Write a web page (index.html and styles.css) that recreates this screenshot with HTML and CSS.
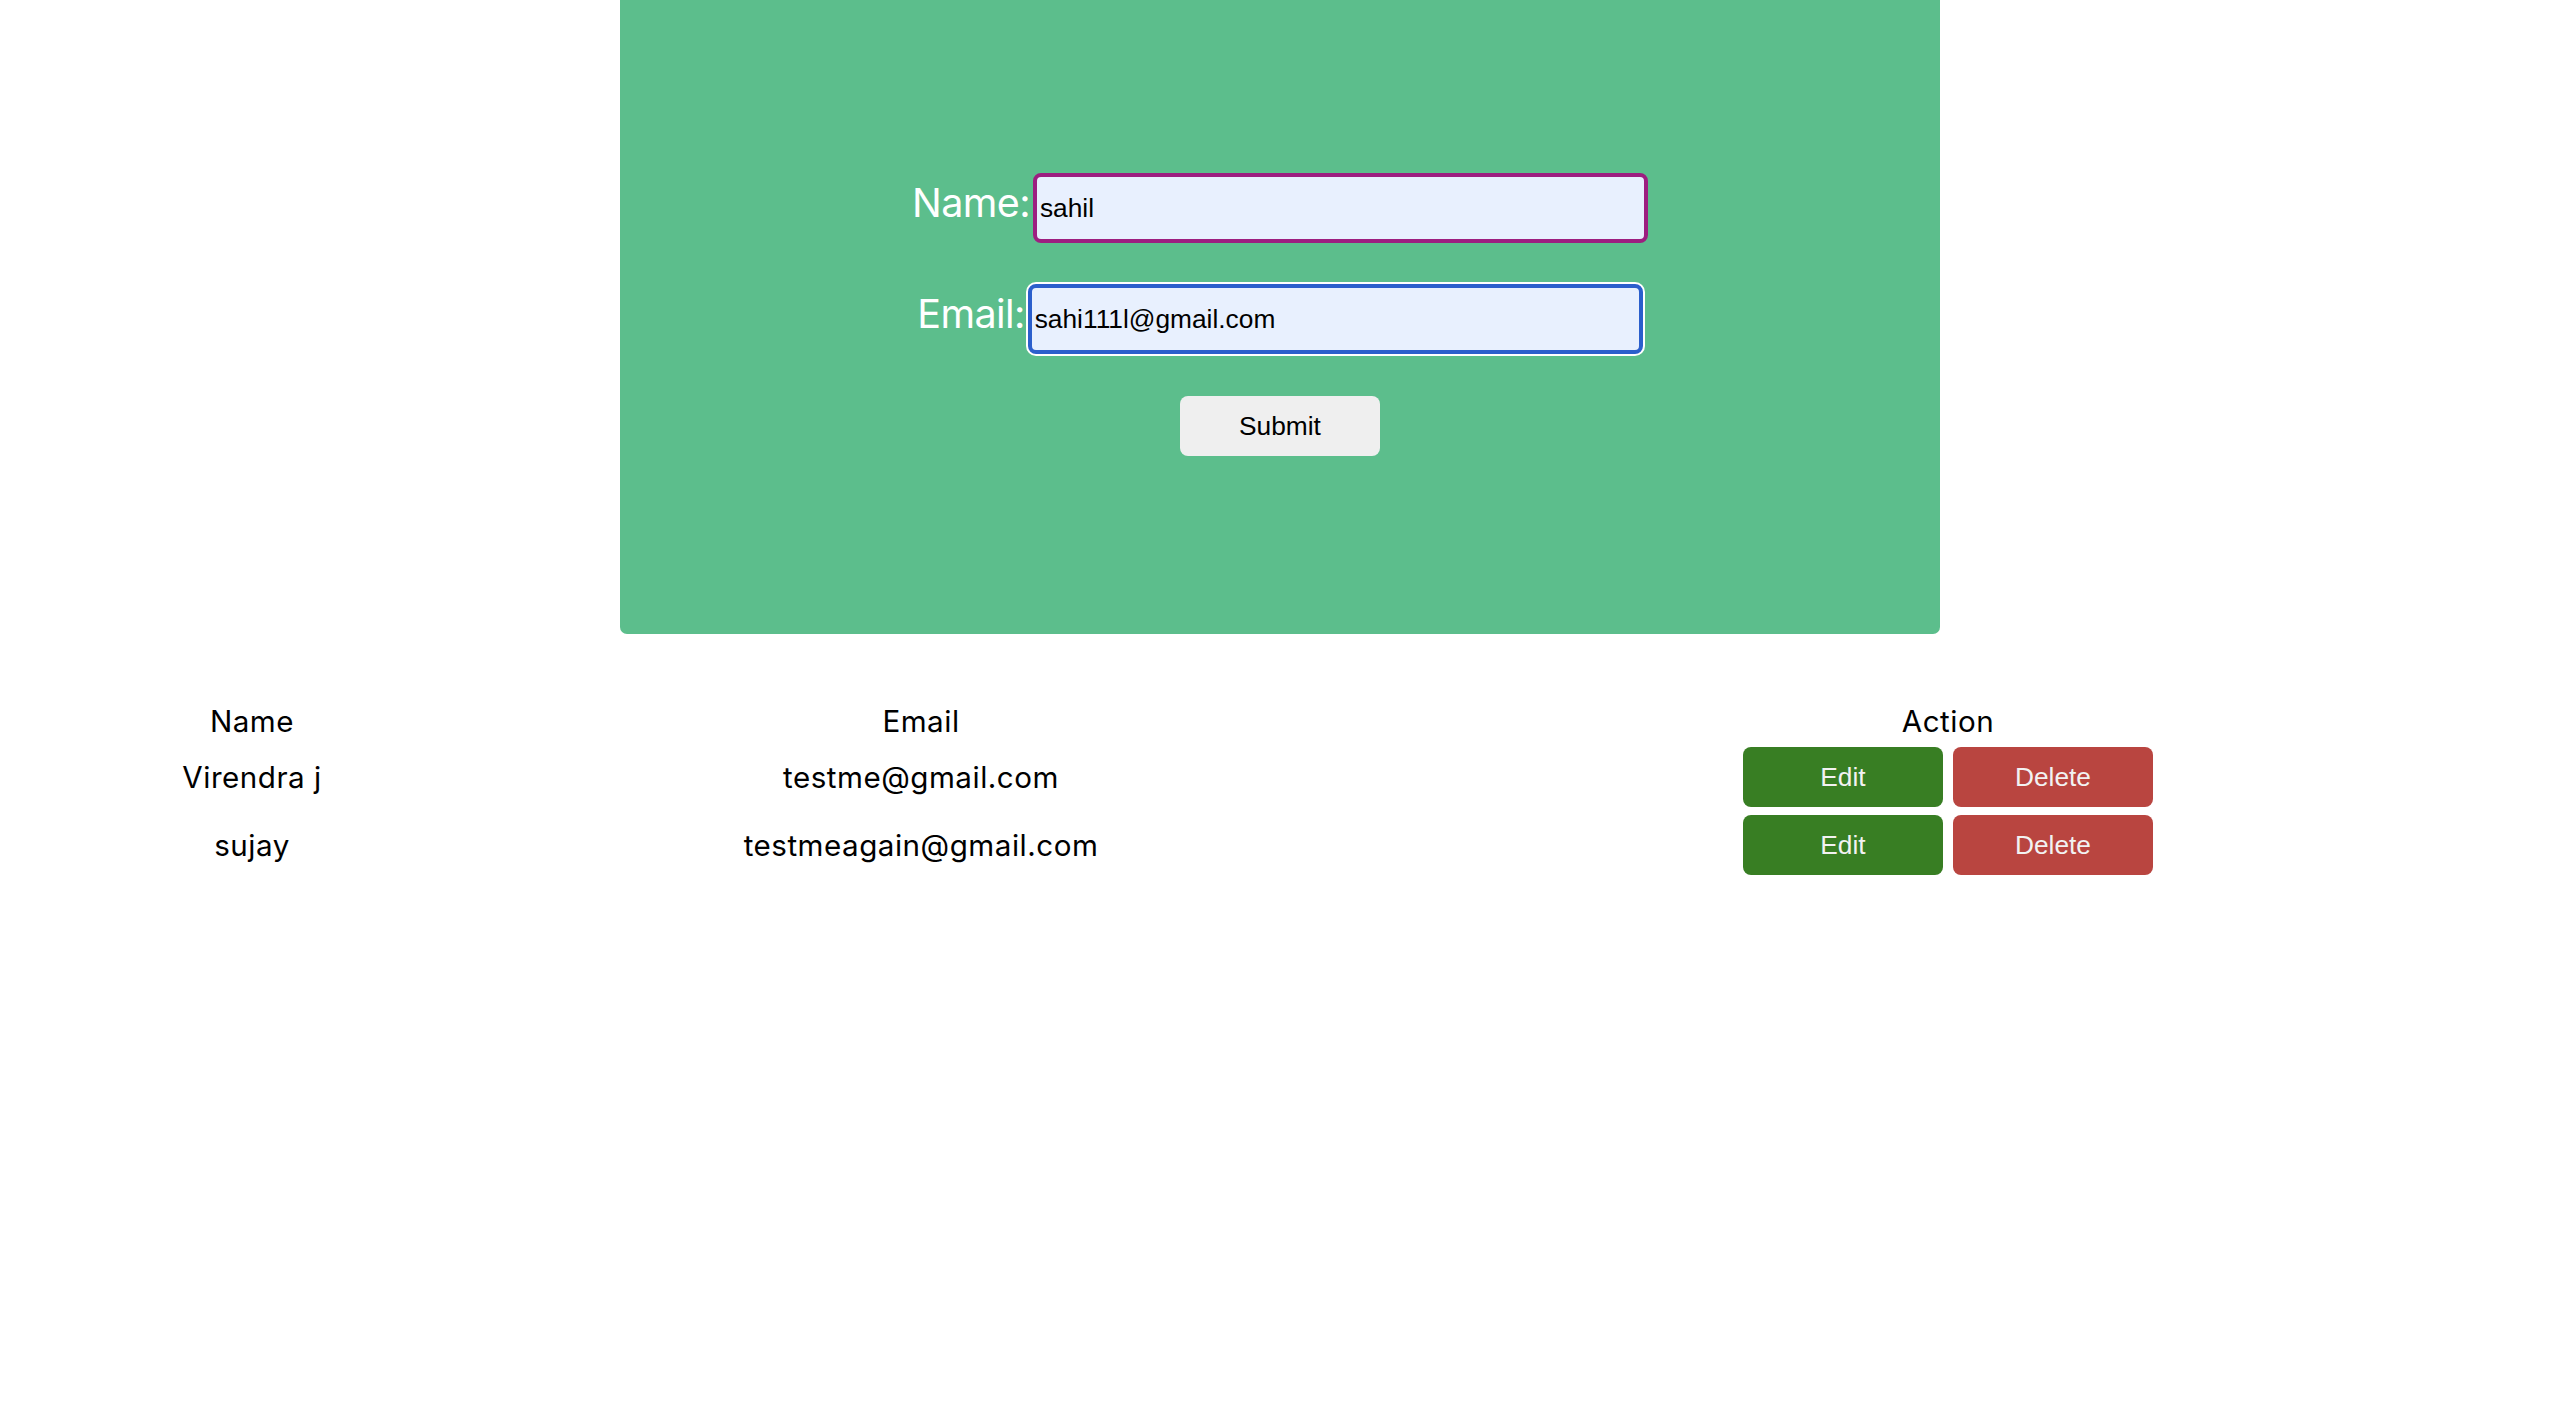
FILE: index.html
```html
<!DOCTYPE html>
<html lang="en">
<head>
<meta charset="utf-8">
<title>Users</title>
<link rel="stylesheet" href="styles.css">
</head>
<body>
<form class="form-card">
  <div class="field">
    <label class="field-label" for="name">Name:</label>
    <input class="field-input field-input--name" id="name" type="text" value="sahil">
  </div>
  <div class="field field--spaced">
    <label class="field-label" for="email">Email:</label>
    <input class="field-input field-input--email" id="email" type="email" value="sahi111l@gmail.com">
  </div>
  <button class="submit-btn" type="button">Submit</button>
</form>

<div class="records">
  <div class="cell cell--head">Name</div>
  <div class="cell cell--head">Email</div>
  <div class="cell cell--head">Action</div>

  <div class="cell">Virendra j</div>
  <div class="cell">testme@gmail.com</div>
  <div class="cell actions">
    <button class="act-btn act-btn--edit" type="button">Edit</button>
    <button class="act-btn act-btn--delete" type="button">Delete</button>
  </div>

  <div class="cell">sujay</div>
  <div class="cell">testmeagain@gmail.com</div>
  <div class="cell actions">
    <button class="act-btn act-btn--edit" type="button">Edit</button>
    <button class="act-btn act-btn--delete" type="button">Delete</button>
  </div>
</div>
</body>
</html>
```

FILE: styles.css
```css
html, body {
  margin: 0;
  padding: 0;
  background: #ffffff;
}

body {
  font-family: Inter, "Noto Sans", sans-serif;
  color: #000;
}

.form-card {
  box-sizing: border-box;
  width: 1320px;
  margin: 0 0 0 620px;
  padding: 173px 0 178px;
  background: #5cbe8c;
  border-radius: 0 0 7px 7px;
  display: flex;
  flex-direction: column;
  align-items: center;
}

.field {
  display: flex;
  align-items: baseline;
  gap: 3px;
}

.field--spaced {
  margin-top: 41px;
}

.field-label {
  color: #ffffff;
  font-family: Inter, "Noto Sans", sans-serif;
  font-size: 39.5px;
  letter-spacing: -0.6px;
  line-height: normal;
}

.field-input {
  box-sizing: border-box;
  width: 615px;
  height: 70px;
  padding: 0 3px;
  margin: 0;
  background: #e8f0fe;
  color: #000;
  font-family: "Liberation Sans", Arial, sans-serif;
  font-size: 26.3px;
  border-radius: 8px;
  outline: none;
}

.field-input--name {
  border: 4px solid #9d1e80;
}

.field-input--email {
  border: 4px solid #2b5fcc;
  box-shadow: 0 0 0 2px #ffffff;
}

.submit-btn {
  margin-top: 42px;
  width: 200px;
  height: 60px;
  border: none;
  border-radius: 8px;
  background: #efefef;
  color: #000;
  font-family: "Liberation Sans", Arial, sans-serif;
  font-size: 26.3px;
  padding: 0;
}

.records {
  margin: 69px 0 0 13px;
  display: grid;
  grid-template-columns: 478px 860px 1194px;
  row-gap: 8px;
  align-items: center;
  justify-items: center;
  font-size: 29.6px;
  letter-spacing: 0.5px;
  line-height: normal;
}

.actions {
  display: flex;
  gap: 10px;
  letter-spacing: normal;
}

.act-btn {
  width: 200px;
  height: 60px;
  border: none;
  border-radius: 8px;
  padding: 0;
  color: #f2f2f2;
  font-family: "Liberation Sans", Arial, sans-serif;
  font-size: 26.3px;
}

.act-btn--edit {
  background: #387e23;
}

.act-btn--delete {
  background: #b94540;
}
```
